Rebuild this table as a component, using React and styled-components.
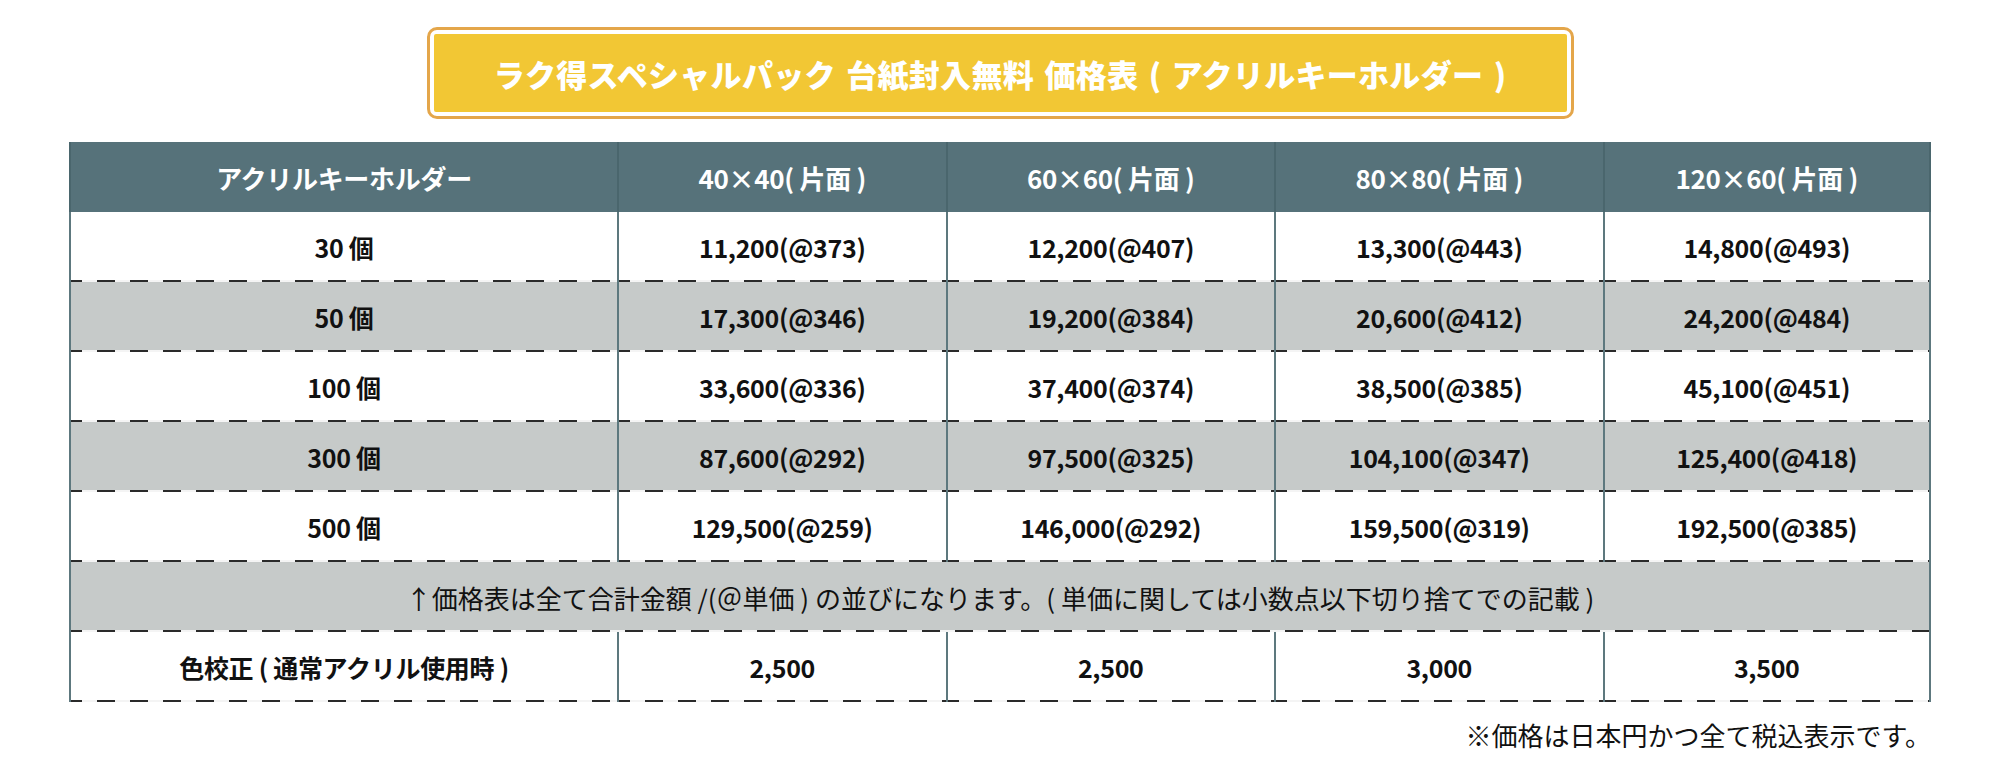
import React from 'react'
import styled, { createGlobalStyle } from 'styled-components'

const GlobalStyle = createGlobalStyle`
  body {
    margin: 0;
    background: #ffffff;
    font-family: "Noto Sans CJK JP", "Noto Sans", sans-serif;
  }
`;

const sizes = ['40×40( 片面 )', '60×60( 片面 )', '80×80( 片面 )', '120×60( 片面 )'];

const prices = [
  { qty: '30 個', cells: ['11,200(@373)', '12,200(@407)', '13,300(@443)', '14,800(@493)'] },
  { qty: '50 個', cells: ['17,300(@346)', '19,200(@384)', '20,600(@412)', '24,200(@484)'] },
  { qty: '100 個', cells: ['33,600(@336)', '37,400(@374)', '38,500(@385)', '45,100(@451)'] },
  { qty: '300 個', cells: ['87,600(@292)', '97,500(@325)', '104,100(@347)', '125,400(@418)'] },
  { qty: '500 個', cells: ['129,500(@259)', '146,000(@292)', '159,500(@319)', '192,500(@385)'] },
];

const colorFix = ['2,500', '2,500', '3,000', '3,500'];

class App extends React.Component {
  render() {
    return (
      <>
        <GlobalStyle />
        <Page>
          <TitleFrame>
            <TitleInner>ラク得スペシャルパック 台紙封入無料 価格表 ( アクリルキーホルダー )</TitleInner>
          </TitleFrame>

          <Table>
            <HeadCell>アクリルキーホルダー</HeadCell>
            {sizes.map((s, i) => (
              <HeadCell key={s} last={i === sizes.length - 1}>{s}</HeadCell>
            ))}

            {prices.map((row, r) => (
              <React.Fragment key={row.qty}>
                <Cell gray={r % 2 === 1}>{row.qty}</Cell>
                {row.cells.map((c, i) => (
                  <Cell key={i} gray={r % 2 === 1} last={i === row.cells.length - 1}>{c}</Cell>
                ))}
              </React.Fragment>
            ))}

            <NoteCell>↑価格表は全て合計金額 /(＠単価 ) の並びになります。( 単価に関しては小数点以下切り捨てでの記載 )</NoteCell>

            <Cell>色校正 ( 通常アクリル使用時 )</Cell>
            {colorFix.map((c, i) => (
              <Cell key={i} last={i === colorFix.length - 1}>{c}</Cell>
            ))}
          </Table>

          <Footnote>※価格は日本円かつ全て税込表示です。</Footnote>
        </Page>
      </>
    )
  }
}

const Page = styled.div`
  width: 2000px;
  height: 780px;
  display: flex;
  flex-direction: column;
  align-items: center;
  padding-top: 27px;
  box-sizing: border-box;
`;

const TitleFrame = styled.div`
  width: 1147px;
  height: 92px;
  box-sizing: border-box;
  border: 3px solid #e4a64a;
  border-radius: 10px;
  padding: 4px;
  background: #ffffff;
`;

const TitleInner = styled.div`
  height: 100%;
  background: #f2c734;
  border-radius: 2px;
  display: flex;
  align-items: center;
  justify-content: center;
  color: #ffffff;
  font-size: 31px;
  font-weight: 900;
  letter-spacing: 0.3px;
  word-spacing: 3px;
`;

const Table = styled.div`
  margin-top: 23px;
  width: 1862px;
  display: grid;
  grid-template-columns: 548px repeat(4, 1fr);
  grid-auto-rows: 70px;
`;

const HeadCell = styled.div`
  background: #56727a;
  color: #ffffff;
  font-size: 26px;
  font-weight: 700;
  display: flex;
  align-items: center;
  justify-content: center;
  letter-spacing: -0.3px;
  border-left: 2px solid #4a666d;
  border-right: ${p => (p.last ? '2px solid #4a666d' : 'none')};
`;

const dashes = `
  background-image: linear-gradient(to right, #2a2a2a 18px, #f4f4f4 18px);
  background-size: 33px 2px;
  background-repeat: repeat-x;
  background-position: -7px bottom;
`;

const Cell = styled.div`
  background-color: ${p => (p.gray ? '#c6cac9' : '#ffffff')};
  ${dashes}
  color: #111111;
  font-size: 25px;
  font-weight: 700;
  display: flex;
  align-items: center;
  justify-content: center;
  letter-spacing: -0.3px;
  border-left: 2px solid #5d787e;
  border-right: ${p => (p.last ? '2px solid #5d787e' : 'none')};
`;

const NoteCell = styled.div`
  grid-column: 1 / -1;
  background-color: #c6cac9;
  ${dashes}
  color: #111111;
  font-size: 26px;
  font-weight: 400;
  display: flex;
  align-items: center;
  justify-content: center;
  border-left: 2px solid #5d787e;
  border-right: 2px solid #5d787e;
`;

const Footnote = styled.div`
  width: 1862px;
  text-align: right;
  margin-top: 14px;
  font-size: 26px;
  color: #111111;
`;

export default App
